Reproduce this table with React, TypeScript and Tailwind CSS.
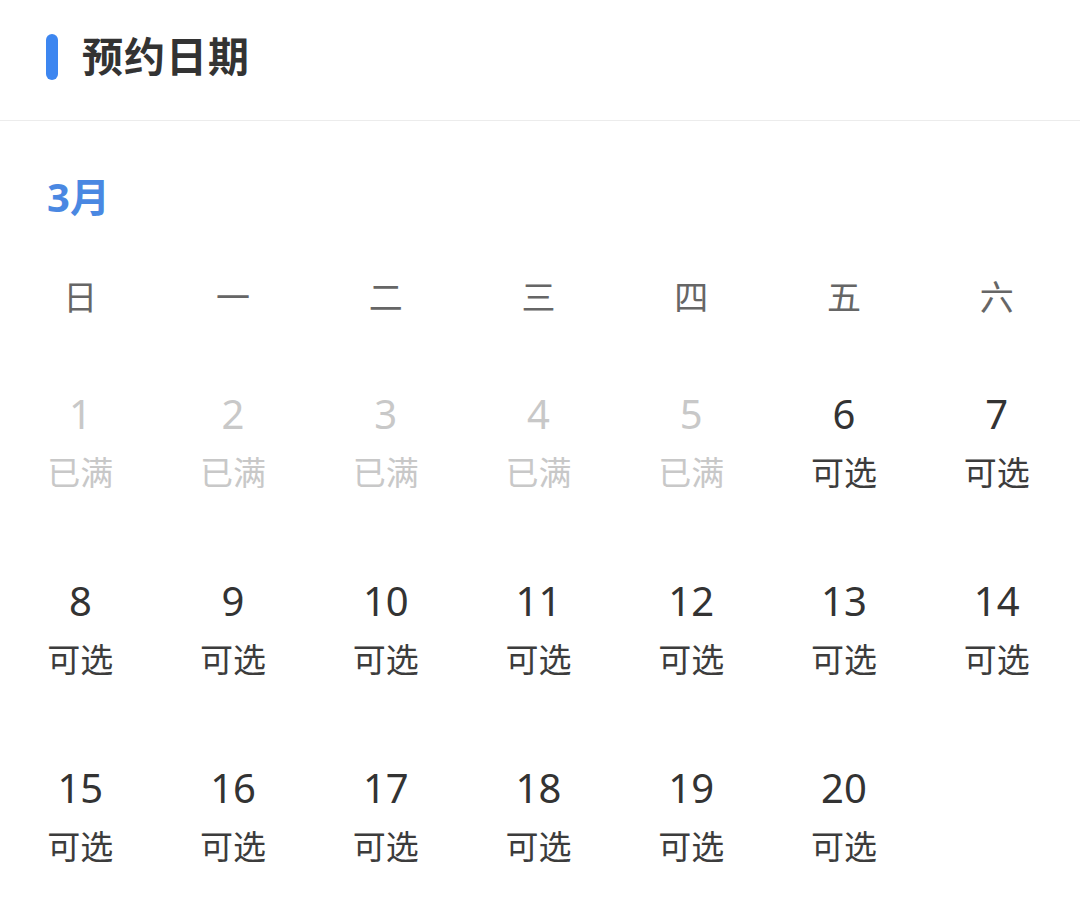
const weekDays = ['日', '一', '二', '三', '四', '五', '六'];

type Day = { date: number; full: boolean };

const days: Day[] = Array.from({ length: 20 }, (_, i) => ({ date: i + 1, full: i < 5 }));

const DayCell = ({ day }: { day: Day }) => {
    return (
        <div className="h-[187px] flex flex-col items-center pt-[26px]">
            <span className={`text-[40px] leading-[56px] ${day.full ? 'text-[#c8c8c8]' : 'text-[#333333]'}`}>{day.date}</span>
            <span className={`text-[33px] leading-[62px] ${day.full ? 'text-[#c8c8c8]' : 'text-[#3c3c3c]'}`}>
                {day.full ? '已满' : '可选'}
            </span>
        </div>
    );
};

const App = () => {
    return (
        <div className="w-[1080px] h-[919px] bg-white overflow-hidden" style={{ fontFamily: '"Noto Sans", "Noto Sans CJK SC", sans-serif' }}>
            {/* Header */}
            <div className="h-[121px] border-b border-[#ececec] flex items-center pl-[46px] pb-[6px]">
                <div className="w-[12px] h-[46px] rounded-full bg-[#3d86f0]" />
                <h2 className="ml-[24px] text-[41px] font-bold text-[#333333] tracking-[1px]">预约日期</h2>
            </div>

            {/* Month */}
            <div className="pl-[47px] pt-[50px] h-[153px]">
                <span className="text-[40px] font-bold text-[#4a88e2] leading-[52px]">3月</span>
            </div>

            {/* Calendar */}
            <div className="pl-[4px] pr-[7px]">
                <div className="grid grid-cols-7 h-[86px]">
                    {weekDays.map((w) => (
                        <div key={w} className="flex items-start justify-center text-[34px] leading-[46px] text-[#666666]">
                            {w}
                        </div>
                    ))}
                </div>
                <div className="grid grid-cols-7">
                    {days.map((d) => (
                        <DayCell key={d.date} day={d} />
                    ))}
                </div>
            </div>
        </div>
    );
};

export default App;
